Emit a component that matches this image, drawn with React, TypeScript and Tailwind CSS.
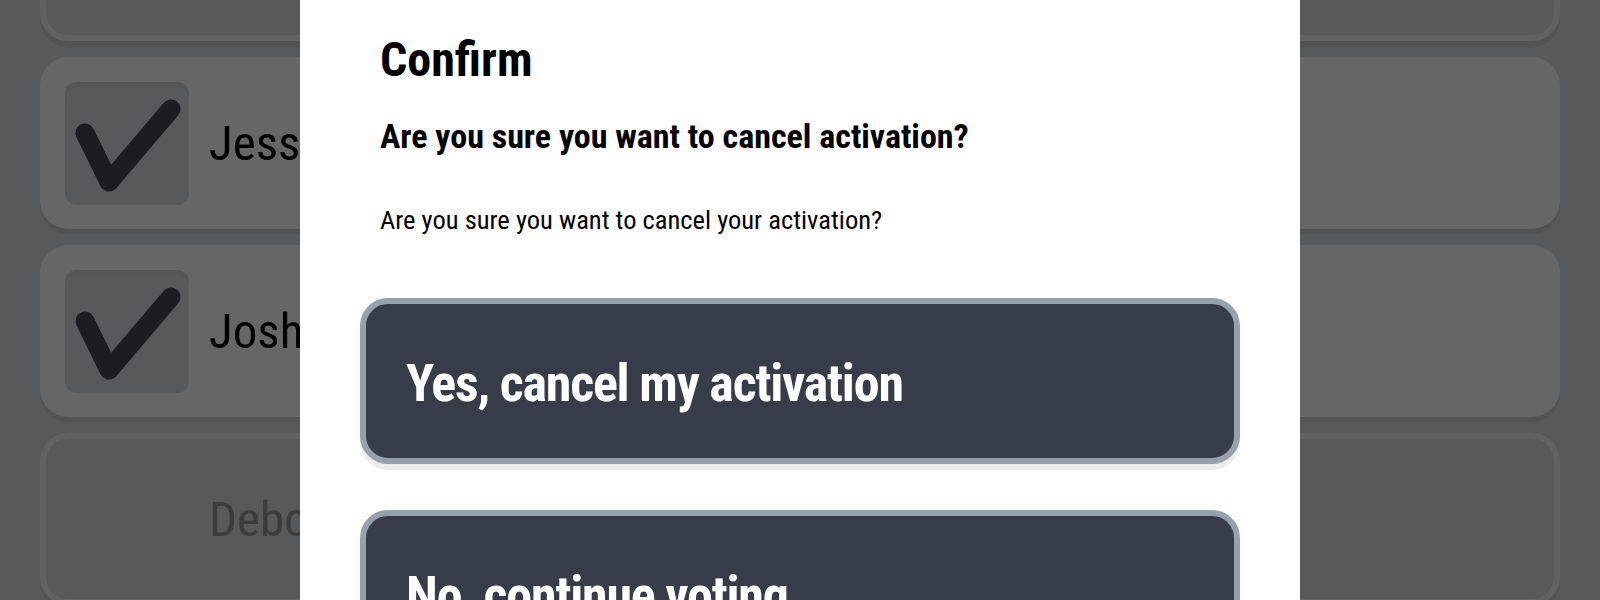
import React from "react";

const FONT = { fontFamily: '"Roboto Condensed", "Liberation Sans Narrow", "DejaVu Sans Condensed", sans-serif' };

function Check() {
  return (
    <div className="w-[124px] h-[123px] shrink-0 rounded-[12px] bg-[#58595b] shadow-[inset_0_5px_0_#555658] flex items-center justify-center">
      <svg width="124" height="123" viewBox="0 0 124 123">
        <path d="M20 51 L44 100 L106 27" fill="none" stroke="#1b1d21" strokeWidth="19" strokeLinecap="round" strokeLinejoin="round" />
      </svg>
    </div>
  );
}

function Card({ name, checked }: { name: string; checked: boolean }) {
  if (checked) {
    return (
      <div className="h-[172px] rounded-[28px] bg-[#666666] shadow-[0_5px_0_#525355] flex items-center gap-[20px] px-[25px]">
        <Check />
        <span className="text-[49px] leading-[49px] text-black whitespace-nowrap">{name}</span>
      </div>
    );
  }
  return (
    <div className="h-[172px] rounded-[28px] border-[6px] border-[#616264] bg-[#58595b] shadow-[0_6px_0_#525355] flex items-center gap-[20px] px-[19px]">
      <div className="w-[124px] h-[123px] shrink-0" />
      <span className="text-[49px] leading-[49px] text-[#3c3c3c] whitespace-nowrap">{name}</span>
    </div>
  );
}

function ModalButton({ label }: { label: string }) {
  return (
    <button className="w-full h-[166px] rounded-[28px] border-[6px] border-[#97a1ab] bg-[#373d48] shadow-[0_6px_0_#ececec] flex items-center px-[40px] pt-[6px] text-left">
      <span className="text-[52px] leading-[52px] tracking-[-1.2px] font-bold text-white whitespace-nowrap">{label}</span>
    </button>
  );
}

export default function App() {
  return (
    <div className="relative w-full h-[600px] overflow-hidden bg-[#58595b]" style={FONT}>
      <div className="flex flex-col gap-4 px-[40px] mt-[-131px]">
        <Card name="Adam Anderson" checked={false} />
        <Card name="Jessica Parker" checked={true} />
        <Card name="Joshua Miller" checked={true} />
        <Card name="Deborah Wilson" checked={false} />
      </div>
      <div className="absolute inset-0 flex justify-center">
        <div className="w-[1000px] h-full bg-white px-[60px] pt-[36px]">
          <div className="px-5">
            <h1 className="text-[48px] leading-[48px] font-bold text-black">Confirm</h1>
            <h2 className="mt-[35px] text-[34px] leading-[34px] font-bold text-black">Are you sure you want to cancel activation?</h2>
            <p className="mt-[54px] text-[26.5px] leading-[26.5px] text-black">Are you sure you want to cancel your activation?</p>
          </div>
          <div className="mt-[64px] flex flex-col gap-[46px]">
            <ModalButton label="Yes, cancel my activation" />
            <ModalButton label="No, continue voting" />
          </div>
        </div>
      </div>
    </div>
  );
}
